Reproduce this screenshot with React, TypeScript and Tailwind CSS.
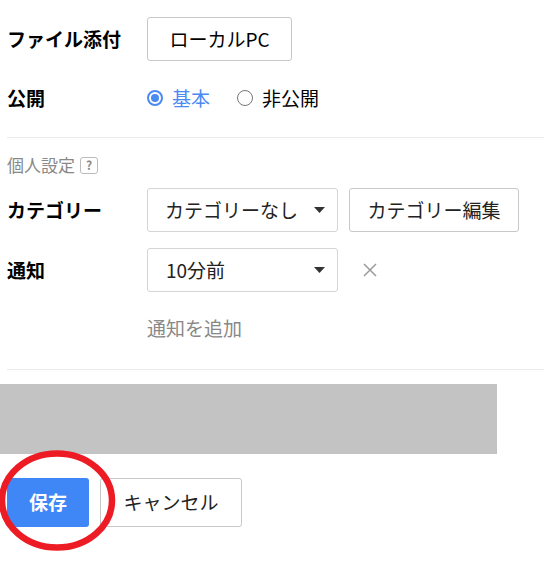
import React from "react";

const font = { fontFamily: '"Noto Sans CJK JP", "Noto Sans", sans-serif' };

const Caret = () => (
  <svg width="11" height="6" viewBox="0 0 11 6" className="shrink-0">
    <path d="M0 0h11L5.5 6z" fill="#333" />
  </svg>
);

const Row: React.FC<{ label: string; className?: string; children: React.ReactNode }> = ({ label, className, children }) => (
  <div className={"flex items-center h-[44px] " + (className ?? "")}>
    <div className="w-[140px] shrink-0 text-[19px] font-bold text-black">{label}</div>
    <div className="flex items-center">{children}</div>
  </div>
);

export default function App() {
  return (
    <div className="w-[544px] h-[579px] bg-white text-[19px] text-[#222] overflow-hidden" style={font}>
      <div className="pl-[7px]">
        <Row label="ファイル添付" className="mt-[17px]">
          <button className="h-[44px] w-[145px] border border-[#c8c8c8] rounded-[3px] bg-white text-[19px] text-black">
            ローカルPC
          </button>
        </Row>

        <Row label="公開" className="mt-[15px]">
          <label className="flex items-center gap-[9px] text-[#4a8af4]">
            <span className="w-[16px] h-[16px] rounded-full border-2 border-[#4a8af4] flex items-center justify-center">
              <span className="w-[8px] h-[8px] rounded-full bg-[#4a8af4]" />
            </span>
            基本
          </label>
          <label className="flex items-center gap-[9px] ml-[27px] text-black">
            <span className="w-[16px] h-[16px] rounded-full border-[1.5px] border-[#777]" />
            非公開
          </label>
        </Row>

        <div className="mt-[17px] h-px bg-[#ebebeb]" />

        <div className="mt-[15px] h-[24px] flex items-center gap-[5px] text-[17px] text-[#888]">
          個人設定
          <span className="w-[18px] h-[17px] border border-[#bbb] rounded-[3px] flex items-center justify-center text-[12px] font-bold text-[#888] leading-none">
            ?
          </span>
        </div>

        <Row label="カテゴリー" className="mt-[11px]">
          <div className="h-[44px] w-[191px] border border-[#d5d5d5] rounded-[3px] flex items-center justify-between pl-[17px] pr-[12px] text-[#222]">
            カテゴリーなし
            <Caret />
          </div>
          <button className="ml-[11px] h-[44px] w-[170px] border border-[#c8c8c8] rounded-[3px] bg-white text-[19px] text-[#222]">
            カテゴリー編集
          </button>
        </Row>

        <Row label="通知" className="mt-[16px]">
          <div className="h-[44px] w-[191px] border border-[#d5d5d5] rounded-[3px] flex items-center justify-between pl-[18px] pr-[12px] text-[#222]">
            10分前
            <Caret />
          </div>
          <svg width="14" height="14" viewBox="0 0 14 14" className="ml-[25px]">
            <path d="M1 1l12 12M13 1L1 13" stroke="#9a9a9a" strokeWidth="1.5" />
          </svg>
        </Row>

        <div className="mt-[23px] ml-[140px] h-[26px] flex items-center text-[#888]">通知を追加</div>

        <div className="mt-[28px] h-px bg-[#ebebeb]" />
      </div>

      <div className="mt-[14px] w-[497px] h-[70px] bg-[#c3c3c3]" />

      <div className="relative mt-[24px] pl-[7px] flex items-center gap-[11px]">
        <button className="h-[49px] w-[82px] rounded-[3px] bg-[#3f86f7] text-white font-bold text-[19px]">保存</button>
        <button className="h-[49px] w-[142px] border border-[#c8c8c8] rounded-[3px] bg-white text-[19px] text-[#222]">
          キャンセル
        </button>
        <svg width="120" height="102" viewBox="0 0 120 102" className="absolute left-[-2px] top-[-28px] pointer-events-none">
          <ellipse cx="59" cy="50.5" rx="55" ry="47" fill="none" stroke="#ed1c24" strokeWidth="6.5" />
        </svg>
      </div>
    </div>
  );
}
